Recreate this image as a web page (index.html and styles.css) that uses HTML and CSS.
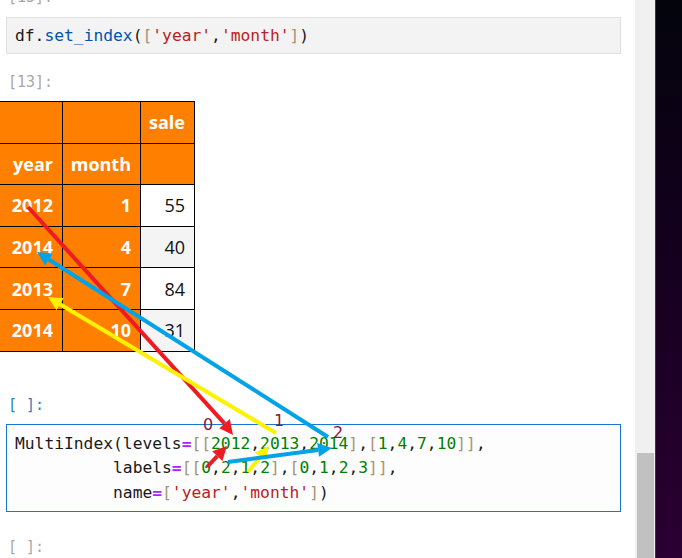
FILE: index.html
```html
<!DOCTYPE html>
<html lang="en">
<head>
<meta charset="utf-8">
<title>MultiIndex</title>
<link rel="stylesheet" href="styles.css">
</head>
<body>
<div class="screen">
  <main class="notebook">
    <div class="prompt prompt-top">[13]:</div>
    <pre class="cell-input">df.<span class="prop">set_index</span>(<span class="br">[</span><span class="str">'year'</span>,<span class="str">'month'</span><span class="br">]</span>)</pre>
    <div class="prompt">[13]:</div>
    <table class="df">
      <thead>
        <tr><th class="c1"></th><th class="c2"></th><th class="c3">sale</th></tr>
        <tr><th class="c1">year</th><th class="c2">month</th><th class="c3"></th></tr>
      </thead>
      <tbody>
        <tr><th class="c1">2012</th><th class="c2">1</th><td class="c3">55</td></tr>
        <tr class="alt"><th class="c1">2014</th><th class="c2">4</th><td class="c3">40</td></tr>
        <tr><th class="c1">2013</th><th class="c2">7</th><td class="c3">84</td></tr>
        <tr class="alt"><th class="c1">2014</th><th class="c2">10</th><td class="c3">31</td></tr>
      </tbody>
    </table>
    <div class="prompt active">[ ]:</div>
    <pre class="cell-input editing">MultiIndex(levels<span class="op">=</span><span class="br">[[</span><span class="num">2012</span>,<span class="num">2013</span>,<span class="num">2014</span><span class="br">]</span>,<span class="br">[</span><span class="num">1</span>,<span class="num">4</span>,<span class="num">7</span>,<span class="num">10</span><span class="br">]]</span>,
          labels<span class="op">=</span><span class="br">[[</span><span class="num">0</span>,<span class="num">2</span>,<span class="num">1</span>,<span class="num">2</span><span class="br">]</span>,<span class="br">[</span><span class="num">0</span>,<span class="num">1</span>,<span class="num">2</span>,<span class="num">3</span><span class="br">]]</span>,
          name<span class="op">=</span><span class="br">[</span><span class="str">'year'</span>,<span class="str">'month'</span><span class="br">]</span>)</pre>
    <div class="prompt">[ ]:</div>
  </main>
  <div class="scrollbar"><div class="thumb"></div></div>
  <div class="desktop"></div>

  <svg class="arrows" width="682" height="558" viewBox="0 0 682 558">
    <g class="red">
      <line x1="28" y1="207" x2="224.6" y2="423.6"/>
      <polygon points="233,435 219.4,428.3 229.8,418.9"/>
      <line x1="207" y1="467" x2="217.3" y2="456.1"/>
      <polygon points="227,446 222.4,461 212.2,451.3"/>
    </g>
    <g class="yellow">
      <line x1="276" y1="433" x2="60" y2="304.2"/>
      <polygon points="48,297 63.6,298.2 56.4,310.2"/>
      <line x1="248" y1="472" x2="260.2" y2="456.9"/>
      <polygon points="269,446 265.6,461.3 254.8,452.5"/>
    </g>
    <g class="blue">
      <line x1="328" y1="437" x2="48.8" y2="259.5"/>
      <polygon points="37,252 52.6,253.6 45,265.4"/>
      <line x1="228" y1="462" x2="318.1" y2="449.9"/>
      <polygon points="332,448 319,456.8 317.2,443"/>
    </g>
    <text class="idx" x="203" y="430">0</text>
    <text class="idx" x="274" y="426">1</text>
    <text class="idx" x="333" y="438">2</text>
  </svg>
</div>
</body>
</html>
```
FILE: styles.css
```css
html, body {
  margin: 0;
  padding: 0;
  background: #ffffff;
}

.screen {
  position: relative;
  width: 682px;
  height: 558px;
  display: flex;
  overflow: hidden;
}

.notebook {
  width: 635px;
  height: 558px;
  overflow: hidden;
  background: #ffffff;
  font-family: "DejaVu Sans Mono", monospace;
}

.prompt {
  font-family: "DejaVu Sans Mono", monospace;
  font-size: 15px;
  line-height: 20px;
  height: 20px;
  color: #a8a8a8;
  padding-left: 8px;
  margin-top: 18px;
}

.prompt-top {
  margin-top: -13px;
}

.prompt.active {
  color: #307fc1;
  margin-top: 43px;
}

.cell-input {
  margin: 10px 14px 0 6px;
  padding: 5px 8px;
  border: 1px solid #e0e0e0;
  background: #f3f3f3;
  font-family: "DejaVu Sans Mono", monospace;
  font-size: 16.3px;
  line-height: 25px;
  color: #1a1a1a;
  white-space: pre;
}

.cell-input.editing {
  margin-top: 9px;
  padding: 7px 8px 6px 8px;
  border: 1px solid #1976d2;
  background: #fdfdfd;
  line-height: 24.5px;
}

.notebook > .cell-input.editing + .prompt {
  margin-top: 25px;
}

.prop { color: #0055aa; }
.br { color: #a69576; }
.str { color: #ba2121; }
.num { color: #008000; }
.op { color: #aa22ff; font-weight: bold; }

.df {
  margin-top: 9px;
  border-collapse: separate;
  border-spacing: 0;
  border-top: 1px solid #000;
  font-family: "Open Sans", "Noto Sans", sans-serif;
  font-size: 18px;
  table-layout: fixed;
}

.df th, .df td {
  height: 40.6px;
  padding: 0 9px 0 0;
  border-right: 1px solid #000;
  border-bottom: 1px solid #000;
  text-align: right;
  box-sizing: border-box;
  height: 41.6px;
  line-height: 20px;
}

.df th {
  background: #ff8000;
  color: #ffffff;
  font-weight: bold;
}

.df .c1 { width: 63px; }
.df .c2 { width: 78px; }
.df .c3 { width: 54px; }

.df td {
  background: #ffffff;
  color: #111111;
  font-weight: normal;
}

.df tr.alt td {
  background: #f4f4f4;
}

.scrollbar {
  width: 21px;
  height: 558px;
  background: #f0f0f0;
  display: flex;
  flex-direction: column;
  justify-content: flex-end;
  border-right: 1px solid #3a3a3a;
  box-sizing: border-box;
}

.thumb {
  margin-left: 2px;
  width: 17px;
  height: 105px;
  background: #c1c1c1;
}

.desktop {
  flex: 1;
  height: 558px;
  background: linear-gradient(to bottom, #03040c 0%, #14001e 45%, #2b0032 100%);
}

.arrows {
  position: absolute;
  left: 0;
  top: 0;
}

.arrows line {
  stroke-width: 4;
  stroke-linecap: butt;
}

.red line { stroke: #ed1c24; }
.red polygon { fill: #ed1c24; }
.yellow line { stroke: #fff200; }
.yellow polygon { fill: #fff200; }
.blue line { stroke: #00a2e8; }
.blue polygon { fill: #00a2e8; }

.idx {
  font-family: "DejaVu Sans", sans-serif;
  font-size: 16px;
  fill: #8b1538;
}
```
